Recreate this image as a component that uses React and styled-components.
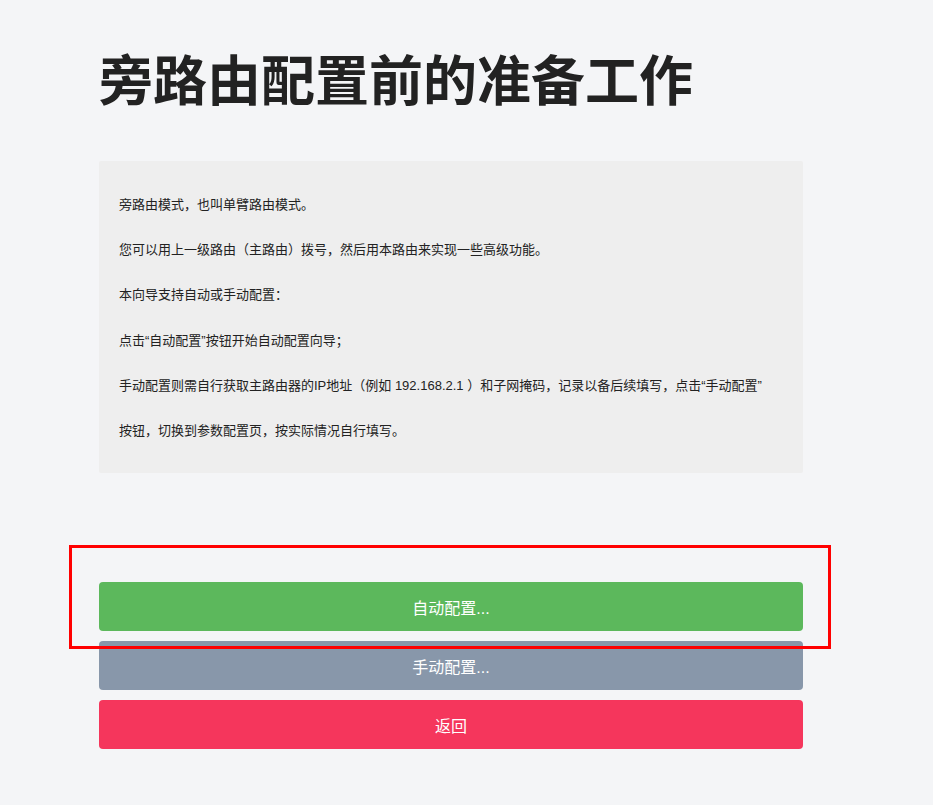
import styled, { createGlobalStyle } from "styled-components";

const GlobalStyle = createGlobalStyle`
  body {
    margin: 0;
    background: #f4f5f7;
    font-family: "Liberation Sans", "Noto Sans CJK SC", sans-serif;
  }
`;

const Page = styled.div`
  position: relative;
  min-height: 805px;
  padding: 48px 0 0 99px;
  box-sizing: border-box;
`;

const Content = styled.div`
  width: 704px;
`;

const Title = styled.h1`
  margin: 0;
  font-family: "Noto Sans CJK SC", sans-serif;
  font-size: 54px;
  line-height: 60px;
  font-weight: 700;
  color: #222;
`;

const Notice = styled.div`
  margin-top: 53px;
  padding: 21px 30px 20px 20px;
  background: #eeeeee;
  border-radius: 2px;
  font-size: 13px;
  line-height: 45.2px;
  color: #222;
`;

const Line = styled.p`
  margin: 0;
`;

const Actions = styled.div`
  margin-top: 109px;
  display: flex;
  flex-direction: column;
  gap: 10px;
`;

const Button = styled.button`
  height: 49px;
  border: none;
  border-radius: 4px;
  background: ${(p) => p.$bg};
  color: #fff;
  font-family: inherit;
  font-size: 16px;
  cursor: pointer;
`;

// annotation frame drawn over the first button
const Highlight = styled.div`
  position: absolute;
  left: 69px;
  top: 545px;
  width: 762px;
  height: 104px;
  border: 3px solid #ff0000;
  box-sizing: border-box;
  pointer-events: none;
`;

export default function App() {
  return (
    <>
      <GlobalStyle />
      <Page>
        <Content>
          <Title>旁路由配置前的准备工作</Title>
          <Notice>
            <Line>旁路由模式，也叫单臂路由模式。</Line>
            <Line>您可以用上一级路由（主路由）拨号，然后用本路由来实现一些高级功能。</Line>
            <Line>本向导支持自动或手动配置：</Line>
            <Line>点击“自动配置”按钮开始自动配置向导；</Line>
            <Line>
              手动配置则需自行获取主路由器的IP地址（例如 192.168.2.1 ）和子网掩码，记录以备后续填写，点击“手动配置”
              <wbr />
              按钮，切换到参数配置页，按实际情况自行填写。
            </Line>
          </Notice>
          <Actions>
            <Button $bg="#5cb85c">自动配置...</Button>
            <Button $bg="#8897aa">手动配置...</Button>
            <Button $bg="#f5365c">返回</Button>
          </Actions>
        </Content>
        <Highlight />
      </Page>
    </>
  );
}
